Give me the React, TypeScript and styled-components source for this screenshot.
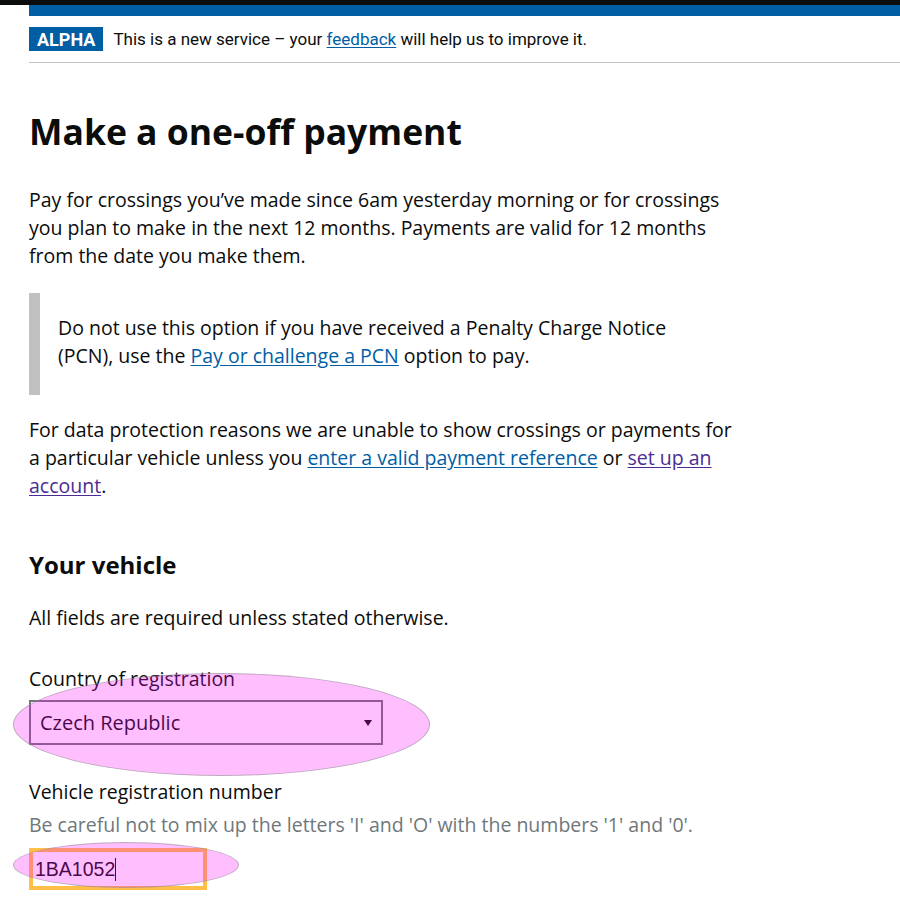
import { useEffect, useRef } from "react";
import styled, { createGlobalStyle } from "styled-components";

const GlobalStyle = createGlobalStyle`
  html, body {
    margin: 0;
    padding: 0;
    background: #ffffff;
  }
  body {
    font-family: "Open Sans", "Noto Sans", sans-serif;
    color: #0b0c0c;
  }
`;

const App = () => {
  const inputRef = useRef<HTMLInputElement>(null);

  useEffect(() => {
    const el = inputRef.current;
    if (el) {
      el.focus();
      el.setSelectionRange(el.value.length, el.value.length);
    }
  }, []);

  return (
    <>
      <GlobalStyle />
      <TopBar />
      <Container>
        <BlueBar />
        <PhaseBanner>
          <PhaseTag>ALPHA</PhaseTag>
          <BannerText>
            This is a new service – your <Link href="#">feedback</Link> will help us to improve it.
          </BannerText>
        </PhaseBanner>

        <Main>
          <HeadingXL>Make a one-off payment</HeadingXL>
          <Body>
            Pay for crossings you’ve made since 6am yesterday morning or for crossings you plan to make in
            the next 12 months. Payments are valid for 12 months from the date you make them.
          </Body>
          <Inset>
            <Body>
              Do not use this option if you have received a Penalty Charge Notice (PCN), use the{" "}
              <Link href="#">Pay or challenge a PCN</Link> option to pay.
            </Body>
          </Inset>
          <Body>
            For data protection reasons we are unable to show crossings or payments for a particular vehicle
            unless you <Link href="#">enter a valid payment reference</Link> or{" "}
            <Link href="#" $visited>
              set up an account
            </Link>
            .
          </Body>

          <HeadingM>Your vehicle</HeadingM>
          <Body>All fields are required unless stated otherwise.</Body>

          <FormGroup>
            <Label htmlFor="country">Country of registration</Label>
            <Annotated>
              <SelectBox id="country" defaultValue="CZ">
                <option value="CZ">Czech Republic</option>
              </SelectBox>
              <SelectArrow />
              <Highlight $left={-16} $top={-27} $width={417} $height={103} />
            </Annotated>
          </FormGroup>

          <FormGroup>
            <Label htmlFor="vrn">Vehicle registration number</Label>
            <Hint>Be careful not to mix up the letters 'I' and 'O' with the numbers '1' and '0'.</Hint>
            <Annotated>
              <TextInput id="vrn" ref={inputRef} defaultValue="1BA1052" />
              <Caret />
              <Highlight $left={-16} $top={-6} $width={226} $height={46} />
            </Annotated>
          </FormGroup>
        </Main>
      </Container>
    </>
  );
};

export default App;

const TopBar = styled.div`
  height: 5px;
  background: #0b0c0c;
`;

const Container = styled.div`
  padding-left: 29px;
`;

const BlueBar = styled.div`
  height: 11px;
  background: #005ea5;
`;

const PhaseBanner = styled.div`
  display: flex;
  align-items: center;
  gap: 10px;
  padding: 11px 0 11px;
  border-bottom: 1px solid #bfc1c3;
`;

const PhaseTag = styled.strong`
  display: inline-block;
  height: 24px;
  line-height: 25px;
  padding: 0 8px;
  background: #005ea5;
  color: #ffffff;
  font-family: Roboto, "Liberation Sans", sans-serif;
  font-size: 18px;
  font-weight: 700;
`;

const BannerText = styled.p`
  margin: 0;
  font-family: Roboto, "Liberation Sans", sans-serif;
  font-size: 17px;
  line-height: 20px;
`;

const Link = styled.a<{ $visited?: boolean }>`
  color: ${(p) => (p.$visited ? "#4c2c92" : "#005ea5")};
  text-decoration: underline;
  text-underline-offset: 2px;
`;

const Main = styled.main`
  padding-top: 44px;
  max-width: 706px;
`;

const HeadingXL = styled.h1`
  margin: 0 0 31px;
  font-size: 35.5px;
  line-height: 48px;
  font-weight: 700;
`;

const Body = styled.p`
  margin: 0 0 23px;
  font-size: 19.5px;
  line-height: 28px;
`;

const Inset = styled.div`
  max-width: 640px;
  border-left: 11px solid #bfc1c3;
  padding: 21px 0 2px 18px;
  margin-bottom: 21px;
`;

const HeadingM = styled.h2`
  margin: 49px 0 23px;
  font-size: 24px;
  line-height: 32px;
  font-weight: 700;
`;

const FormGroup = styled.div`
  margin-top: 33px;
`;

const Label = styled.label`
  display: block;
  font-size: 19.5px;
  line-height: 28px;
  margin-bottom: 7px;
`;

const Hint = styled.span`
  display: block;
  color: #6f777b;
  font-size: 19.5px;
  line-height: 28px;
  margin-top: -2px;
  margin-bottom: 9px;
`;

const Annotated = styled.div`
  position: relative;
  width: max-content;
`;

const SelectBox = styled.select`
  appearance: none;
  display: block;
  width: 354px;
  height: 45px;
  box-sizing: border-box;
  border: 2px solid #6f777b;
  border-radius: 0;
  background: #ffffff;
  padding: 0 9px;
  font-family: "Open Sans", "Noto Sans", sans-serif;
  font-size: 20px;
  color: #0b0c0c;
`;

const SelectArrow = styled.span`
  position: absolute;
  right: 11px;
  top: 20px;
  width: 0;
  height: 0;
  border-left: 4px solid transparent;
  border-right: 4px solid transparent;
  border-top: 6px solid #0b0c0c;
  pointer-events: none;
`;

const TextInput = styled.input`
  display: block;
  width: 178px;
  height: 42px;
  box-sizing: border-box;
  border: 4px solid #ffbf47;
  border-radius: 0;
  outline: none;
  padding: 0 2px;
  font-family: "Liberation Sans", Arial, sans-serif;
  font-size: 19.5px;
  color: #0b0c0c;
  caret-color: transparent;
  background: #ffffff;
`;

const Caret = styled.span`
  position: absolute;
  left: 86px;
  top: 10px;
  width: 1px;
  height: 23px;
  background: #0b0c0c;
  pointer-events: none;
`;

const Highlight = styled.span<{ $left: number; $top: number; $width: number; $height: number }>`
  position: absolute;
  left: ${(p) => p.$left}px;
  top: ${(p) => p.$top}px;
  width: ${(p) => p.$width}px;
  height: ${(p) => p.$height}px;
  box-sizing: border-box;
  border-radius: 50%;
  background: rgba(255, 0, 255, 0.25);
  border: 1px solid rgba(150, 150, 150, 0.6);
  pointer-events: none;
`;
